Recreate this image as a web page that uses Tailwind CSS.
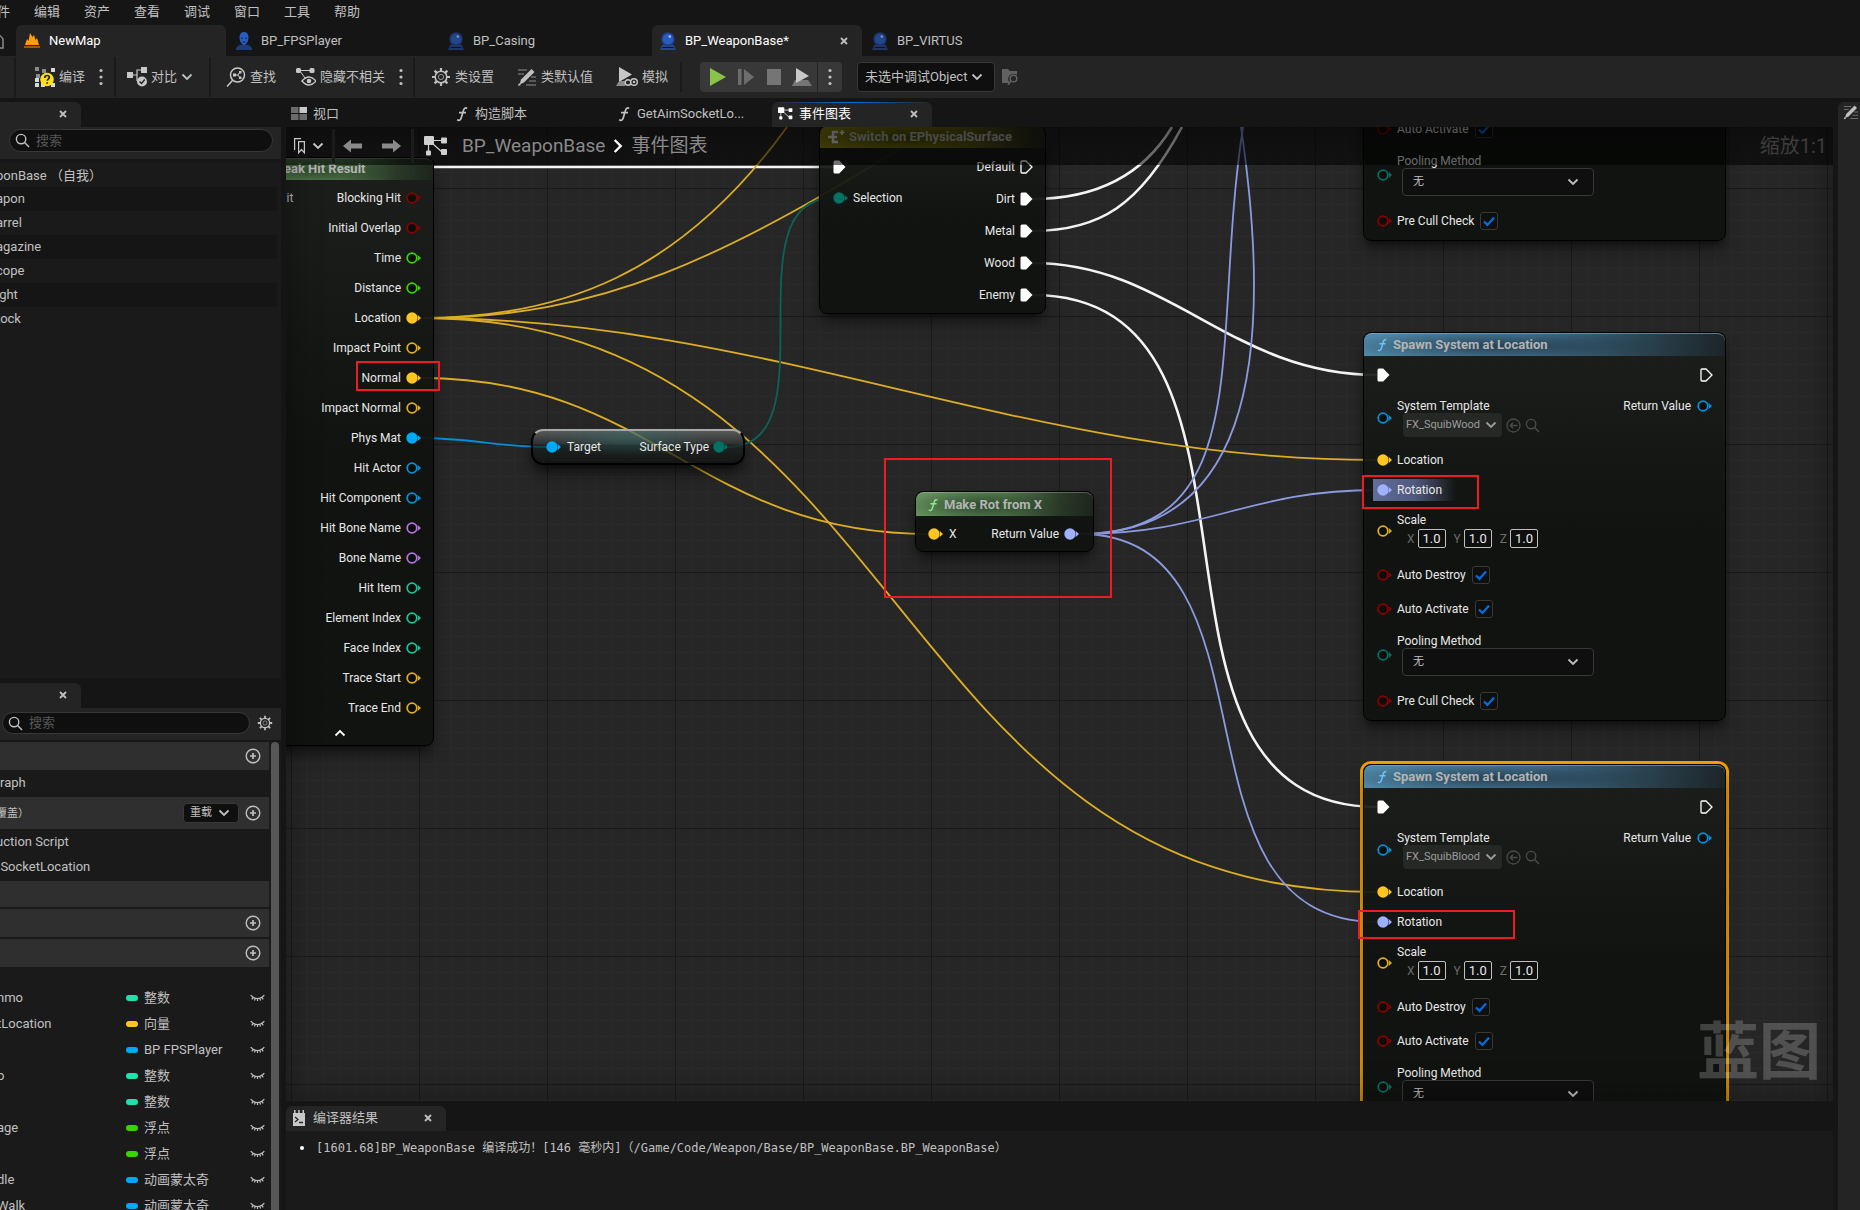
<!DOCTYPE html>
<html lang="zh-CN">
<head>
    <meta charset="UTF-8">
    <meta name="viewport" content="width=device-width, initial-scale=1.0">
    <title>BP_WeaponBase</title>
    <script src="https://cdn.jsdelivr.net/npm/@tailwindcss/browser@4"></script>
    <style>
        body {
            font-family: Roboto, "Noto Sans CJK SC", sans-serif;
        }
        .mono {
            font-family: "DejaVu Sans Mono", "Noto Sans CJK SC", monospace;
        }
        /* Full-width brackets with centred glyphs */
        .punct {
            display: inline-block;
            font-family: "Noto Sans CJK TC", sans-serif;
            text-spacing-trim: space-all;
        }
        /* 16px minor grid, 128px major grid */
        .grid-paper {
            background-color: #262626;
            background-image:
                linear-gradient(to right, #1a1a1a 1px, transparent 1px),
                linear-gradient(to bottom, #1a1a1a 1px, transparent 1px),
                linear-gradient(to right, #2a2a2a 1px, transparent 1px),
                linear-gradient(to bottom, #2a2a2a 1px, transparent 1px);
            background-size: 128px 128px, 128px 128px, 16px 16px, 16px 16px;
            background-position: 5px 61px, 5px 61px, 5px 13px, 5px 13px;
        }
        .node-body {
            background: linear-gradient(to bottom, rgba(27, 30, 27, .93), rgba(15, 18, 15, .95) 50%);
        }
        .getter-body {
            background: radial-gradient(ellipse 40% 60% at 45% 20%, rgba(50, 110, 105, .5), transparent),
                linear-gradient(to bottom, rgba(115, 115, 115, .65) 0, rgba(50, 54, 54, .6) 42%, rgba(24, 32, 30, .65) 45%, rgba(14, 16, 14, .75) 100%);
        }
        .head-blue {
            background: radial-gradient(ellipse 45% 70% at 38% 55%, rgba(25, 45, 60, .75), transparent),
                linear-gradient(100deg, #5088a8 0%, #477896 45%, #2c4654 75%, #1c2428 100%);
        }
        .head-green {
            background: radial-gradient(ellipse 45% 70% at 38% 55%, rgba(25, 50, 25, .7), transparent),
                linear-gradient(100deg, #66925f 0%, #557c50 50%, #2a3a28 80%, #1c241c 100%);
        }
        .head-yellow {
            background: radial-gradient(ellipse 45% 70% at 38% 55%, rgba(50, 50, 0, .7), transparent),
                linear-gradient(100deg, #8d8c14 0%, #7c7b12 50%, #3a3a1c 85%, #232320 100%);
        }
    </style>
</head>
<body class="bg-[#151515] text-[#c0c0c0] text-[13px] leading-4">

    <!-- Icon set -->
    <svg class="hidden">
        <symbol id="i-chevron" viewBox="0 0 12 12"><path d="M1.500 3.500 6 8l4.500-4.500" fill="none" stroke="currentColor" stroke-width="1.800"/></symbol>
        <symbol id="i-close" viewBox="0 0 8 8"><path d="M1 1l6 6M7 1 1 7" stroke="currentColor" stroke-width="1.800"/></symbol>
        <symbol id="i-search" viewBox="0 0 16 16"><g fill="none" stroke="currentColor" stroke-width="1.500"><circle cx="6.500" cy="6.500" r="5"/><path d="m10.200 10.200 4.800 4.800"/></g></symbol>
        <symbol id="i-dots" viewBox="0 0 4 18"><g fill="currentColor"><circle cx="2" cy="2.500" r="1.600"/><circle cx="2" cy="9" r="1.600"/><circle cx="2" cy="15.500" r="1.600"/></g></symbol>
        <symbol id="i-plus" viewBox="0 0 16 16"><g fill="none" stroke="currentColor" stroke-width="1.400"><circle cx="8" cy="8" r="6.800"/><path d="M8 5v6M5 8h6" stroke-width="1.700"/></g></symbol>
        <symbol id="i-gear" viewBox="0 0 20 20"><g fill="none" stroke="currentColor"><circle cx="10" cy="10" r="5.800" stroke-width="1.600"/><circle cx="10" cy="10" r="2.600" stroke-width="1" opacity=".7"/><path d="M10 1v3.500M10 15.500V19M1 10h3.500M15.500 10H19M3.600 3.600l2.500 2.500M13.900 13.900l2.500 2.500M16.400 3.600l-2.500 2.500M6.100 13.900l-2.500 2.500" stroke-width="2.200"/></g></symbol>
        <symbol id="i-f" viewBox="0 0 14 16"><path d="M12 2.600C10.800 1.300 9.300 1.800 8.600 4L6.200 12c-.7 2.300-2.400 3-4 1.700M4 6.700h7" fill="none" stroke="currentColor" stroke-width="1.700"/></symbol>
        <symbol id="i-graph" viewBox="0 0 24 20"><g fill="currentColor"><rect x="0" y="0" width="10" height="9" rx="1"/><rect x="17" y="1.500" width="6" height="6" rx="1"/><rect x="17" y="13" width="6" height="6" rx="1"/><rect x="2" y="14.500" width="5" height="5" rx="1"/></g><path d="M9 4.500h9M9 8l9 8M4.500 9v6" stroke="currentColor" stroke-width="1.200"/></symbol>
        <symbol id="i-sphere" viewBox="0 0 16 18"><path d="M2.500 12.500h11l2.500 5.500H0z" fill="#24468c"/><path d="M2.500 15.500h11" stroke="#151515"/><circle cx="8" cy="7" r="6.800" fill="#1e3f8c"/><circle cx="8" cy="7" r="5.300" fill="#2a5bc0"/><circle cx="9.800" cy="4.500" r="1.300" fill="#9fc0ff"/></symbol>
        <symbol id="i-person" viewBox="0 0 16 18"><path d="M0 18c0-3.500 2.500-5 5-5.300h6c2.500.3 5 1.800 5 5.300z" fill="#1f3c78"/><path d="M8 0c3 0 4.500 2 4.500 5.500S10.500 13 8 13 3.500 9 3.500 5.500 5 0 8 0z" fill="#2a5bc0"/><path d="M5 6.200h2M9 6.200h2M6.500 10h3" stroke="#14264d"/></symbol>
        <symbol id="i-level" viewBox="0 0 16 15"><path d="M0 15v-2h16v2z" fill="#9a5c08"/><path d="M1 12 3 6l1.500 2L6 0l2.500 4L10 2l1.500 5L13 5l2 7z" fill="#ff9d0c"/></symbol>
        <symbol id="i-pencil" viewBox="0 0 20 20"><path d="M1 3h9M1 7h6M12 14h7M9 18h10M14 10h5" stroke="#6b6b6b" stroke-width="1.300"/><path d="m2.500 17.500 1.500-5L14.500 2l3 3L7 15.500z" fill="currentColor"/><path d="m1 19 3-1-2-2z" fill="currentColor"/></symbol>
        <symbol id="i-eye" viewBox="0 0 15 8"><path d="M.7 1.200c3.500 4.400 10.100 4.400 13.600 0M3 3.500 1.800 5.300M7.500 4.800V7M12 3.500l1.200 1.800M5.100 4.600l-.6 1.900M9.900 4.600l.6 1.900" fill="none" stroke="currentColor" stroke-width="1.200"/></symbol>
        <symbol id="i-arrow" viewBox="0 0 20 14"><path d="M0 7 8 .5v4h11v5H8v4z" fill="currentColor"/></symbol>
        <symbol id="p-open" viewBox="0 0 16 12"><circle cx="6" cy="6" r="4.800" fill="#0b0d0b" stroke="currentColor" stroke-width="1.800"/><path d="M11.500 2.800 15 6l-3.500 3.200c.8-2 .8-4.400 0-6.400z" fill="currentColor"/></symbol>
        <symbol id="p-full" viewBox="0 0 16 12"><circle cx="6" cy="6" r="5.700" fill="currentColor"/><path d="M11.500 2.800 15 6l-3.500 3.200c.8-2 .8-4.400 0-6.400z" fill="currentColor"/></symbol>
        <symbol id="x-open" viewBox="0 0 13 14"><path d="M1 2q0-1 1-1h4l6 6-6 6H2q-1 0-1-1z" fill="none" stroke="#fff" stroke-width="1.300"/></symbol>
        <symbol id="x-full" viewBox="0 0 13 14"><path d="M.5 2q0-1.500 1.500-1.500h4.200L12.500 7l-6.300 6.500H2q-1.500 0-1.500-1.500z" fill="#fff"/></symbol>
    </svg>

    <div class="flex flex-col h-screen overflow-hidden">
        <!-- Menu bar -->
        <nav class="flex gap-6 h-[25px] -ml-4 pt-1 shrink-0 whitespace-nowrap">
            <a href="#">文件</a>
            <a href="#">编辑</a>
            <a href="#">资产</a>
            <a href="#">查看</a>
            <a href="#">调试</a>
            <a href="#">窗口</a>
            <a href="#">工具</a>
            <a href="#">帮助</a>
        </nav>

        <!-- Document tabs -->
        <div class="flex gap-0.5 h-[31px] shrink-0">
            <div class="w-3.5 flex items-center overflow-hidden">
                <svg class="w-4 h-4 -ml-3 shrink-0" viewBox="0 0 16 16"><path d="M1 15V6q7-10 14 0v9h-4V9H7v6z" fill="none" stroke="#8a8a8a" stroke-width="1.500"/></svg>
            </div>
            <a href="#" class="w-[210px] flex items-center gap-[9px] pl-2 bg-[#242424] rounded-t-md text-white"><svg class="w-4 h-[15px]"><use href="#i-level"/></svg>NewMap</a>
            <a href="#" class="w-[210px] flex items-center gap-[9px] pl-2"><svg class="w-4 h-[18px]"><use href="#i-person"/></svg>BP_FPSPlayer</a>
            <a href="#" class="w-[210px] flex items-center gap-[9px] pl-2"><svg class="w-4 h-[18px] opacity-70"><use href="#i-sphere"/></svg>BP_Casing</a>
            <div class="w-[210px] flex items-center gap-[9px] pl-2 bg-[#242424] rounded-t-md text-white"><svg class="w-4 h-[18px]"><use href="#i-sphere"/></svg>BP_WeaponBase*
                <button aria-label="关闭" class="ml-auto mr-3.5 text-[#c0c0c0]"><svg class="w-2 h-2"><use href="#i-close"/></svg></button>
            </div>
            <a href="#" class="w-[210px] flex items-center gap-[9px] pl-2"><svg class="w-4 h-[18px] opacity-70"><use href="#i-sphere"/></svg>BP_VIRTUS</a>
        </div>

        <!-- Toolbar -->
        <div class="flex h-[42px] py-px bg-[#242424] shrink-0 whitespace-nowrap">
            <div class="w-4 border-r-2 border-[#1a1a1a]"></div>
            <div class="flex items-center pl-[19px] pr-[11px] border-r-2 border-[#1a1a1a]">
                <button class="flex items-center gap-1">
                    <svg class="w-5 h-5" viewBox="0 0 20 20"><g fill="#8a8a8a"><path d="M0 0h4v4H0zM7 2h4v4H7zM1 7h4v4H1z"/></g><g fill="#d8d8d8"><path d="M16 1h4v4h-4zM0 11h4v4H0zM0 16h4v4H0zM6 16h4v4H6zM16 16h4v4h-4z"/></g><circle cx="12" cy="12.500" r="6.800" fill="#ffdf18"/><path d="M9.800 11q0-2.500 2.300-2.500 2.200 0 2.200 1.900c0 1.400-2 1.500-2 3.300M12.200 15.200v1.600" fill="none" stroke="#222" stroke-width="1.700"/></svg>
                    编译
                </button>
                <button aria-label="编译选项" class="ml-3.5"><svg class="w-1 h-[18px]"><use href="#i-dots"/></svg></button>
            </div>
            <div class="flex items-center pl-[11px] pr-4 border-r-2 border-[#1a1a1a]">
                <button class="flex items-center gap-1">
                    <svg class="w-5 h-5" viewBox="0 0 20 20"><path d="M0 5h6v6H0zM14 0h6v6h-6z" fill="#c8c8c8"/><path d="M6 8h4V3h4M10 8v6" fill="none" stroke="#c8c8c8" stroke-width="1.200"/><circle cx="15" cy="14.500" r="5" fill="#c8c8c8"/><path d="m12.500 14.500 2 2 3.300-4" fill="none" stroke="#242424" stroke-width="1.500"/></svg>
                    对比
                    <svg class="w-3 h-3"><use href="#i-chevron"/></svg>
                </button>
            </div>
            <div class="flex items-center pl-[15px] pr-2.5 border-r-2 border-[#1a1a1a]">
                <button class="flex items-center gap-1">
                    <svg class="w-5 h-5" viewBox="0 0 20 20"><g fill="none" stroke="#c8c8c8" stroke-width="1.500"><circle cx="11.500" cy="8" r="7"/><path d="m6.500 13.500-5.500 6"/></g><path d="M7 6.500h3v3H7zM13 4h2.500v2.500H13zM13 9.500h2.500V12H13z" fill="#c8c8c8"/><path d="M10 8h2l1.500-2.500M12 8l1.500 2.500" fill="none" stroke="#c8c8c8"/></svg>
                    查找
                </button>
                <button class="flex items-center gap-1 ml-5">
                    <svg class="w-5 h-5" viewBox="0 0 20 20"><path d="M3 3.500h13M4 4l5 7" stroke="#c8c8c8"/><rect x="0" y="1" width="5" height="5" rx="1.500" fill="#c8c8c8"/><rect x="13.500" y="1" width="5" height="5" rx="1.500" fill="#c8c8c8"/><path d="M6 14q7-8 14 0-7 8-14 0z" fill="#242424" stroke="#c8c8c8" stroke-width="1.500"/><circle cx="13" cy="14" r="2.300" fill="#c8c8c8"/></svg>
                    隐藏不相关
                </button>
                <button aria-label="隐藏选项" class="ml-3.5"><svg class="w-1 h-[18px]"><use href="#i-dots"/></svg></button>
            </div>
            <div class="flex items-center gap-[23px] pl-4 pr-3">
                <button class="flex items-center gap-1"><svg class="w-5 h-5"><use href="#i-gear"/></svg>类设置</button>
                <button class="flex items-center gap-1"><svg class="w-5 h-5"><use href="#i-pencil"/></svg>类默认值</button>
                <button class="flex items-center gap-1">
                    <svg class="w-[22px] h-5" viewBox="0 0 22 20"><path d="M3 0l13 7.500L3 15z" fill="#c8c8c8"/><path d="M0 19l3-5h6v5z" fill="#8a8a8a"/><g fill="#242424" stroke="#c8c8c8" stroke-width="1.400"><circle cx="12" cy="15.500" r="2.800"/><circle cx="18" cy="15" r="3.300"/></g><circle cx="18" cy="15" r="1.200" fill="#c8c8c8"/></svg>
                    模拟
                </button>
            </div>
            <div class="w-0.5 my-[5px] bg-[#1a1a1a]"></div>
            <div class="flex items-center self-center h-[30px] ml-[18px] rounded bg-[#383838]">
                <button aria-label="播放" class="pl-2.5 pr-3"><svg class="w-4 h-[18px]" viewBox="0 0 16 18"><path d="M0 0l16 9-16 9z" fill="#8bc34a"/></svg></button>
                <button aria-label="步进" class="pr-[13px]"><svg class="w-4 h-4" viewBox="0 0 16 16"><path d="M0 0h3.500v16H0zM6 0l10 8-10 8z" fill="#6d6d6d"/></svg></button>
                <button aria-label="停止" class="pr-[11px]"><svg class="w-3.5 h-4" viewBox="0 0 14 16"><path d="M0 0h14v16H0z" fill="#757575"/></svg></button>
                <button aria-label="弹出" class="pr-[5px]"><svg class="w-5 h-[18px]" viewBox="0 0 20 18"><path d="M3 12h13l4 6H0z" fill="#757575"/><path d="M4 0l13 8L4 15z" fill="#c8c8c8"/></svg></button>
                <div class="w-px h-full bg-[#242424]"></div>
                <button aria-label="播放选项" class="px-2.5"><svg class="w-1 h-[18px]"><use href="#i-dots"/></svg></button>
            </div>
            <div class="grid items-center self-center ml-[15px]">
                <select aria-label="调试对象" class="[grid-area:1/1] appearance-none w-[138px] h-[30px] pl-[7px] rounded border border-[#383838] bg-[#0f0f0f]">
                    <option>未选中调试Object</option>
                </select>
                <svg class="[grid-area:1/1] justify-self-end mr-3 w-3 h-3 pointer-events-none"><use href="#i-chevron"/></svg>
            </div>
            <button aria-label="浏览" class="ml-[7px]"><svg class="w-4 h-4" viewBox="0 0 16 16"><path d="M0 0h6l1.500 2H15v4a5 5 0 0 0-7 8H0z" fill="#616161"/><circle cx="11.500" cy="9.500" r="3.300" fill="none" stroke="#616161" stroke-width="1.500"/><path d="m9 12-3 4" stroke="#616161" stroke-width="1.500"/></svg></button>
        </div>

        <div class="flex flex-1 min-h-0">
            <!-- Left column -->
            <aside class="w-[281px] shrink-0 flex flex-col gap-[5px] pt-1 overflow-hidden">
                <section class="flex-[576] min-h-0 flex flex-col">
                    <div class="w-[81px] h-[25px] shrink-0 flex items-center justify-end pr-3.5 pb-0.5 bg-[#242424] rounded-tr-md">
                        <button aria-label="关闭"><svg class="w-2 h-2"><use href="#i-close"/></svg></button>
                    </div>
                    <div class="h-8 shrink-0 bg-[#242424] pl-[9px] pr-2 pt-0.5">
                        <label class="flex items-center gap-1.5 h-[23px] px-[5px] rounded-full border border-[#383838] bg-[#0f0f0f]">
                            <svg class="w-[15px] h-[15px] shrink-0"><use href="#i-search"/></svg>
                            <input type="text" placeholder="搜索" aria-label="搜索组件" class="w-full outline-none placeholder:text-[#575757]">
                        </label>
                    </div>
                    <ul id="components" class="flex-1 bg-[#1a1a1a] border-t-4 border-[#171717] pr-1 overflow-hidden"></ul>
                </section>

                <section class="flex-[527] min-h-0 flex flex-col">
                    <div class="w-[81px] h-[25px] shrink-0 flex items-center justify-end pr-3.5 pb-0.5 bg-[#242424] rounded-tr-md">
                        <button aria-label="关闭"><svg class="w-2 h-2"><use href="#i-close"/></svg></button>
                    </div>
                    <div class="h-8 shrink-0 flex items-center gap-[7px] bg-[#242424] pl-0.5 pr-2 pb-0.5">
                        <label class="flex-1 flex items-center gap-1.5 h-[22px] px-[5px] rounded-full border border-[#383838] bg-[#0f0f0f]">
                            <svg class="w-[15px] h-[15px] shrink-0"><use href="#i-search"/></svg>
                            <input type="text" placeholder="搜索" aria-label="搜索蓝图" class="w-full outline-none placeholder:text-[#575757]">
                        </label>
                        <button aria-label="设置"><svg class="w-4 h-4"><use href="#i-gear"/></svg></button>
                    </div>
                    <div class="flex flex-1 min-h-0 bg-[#1a1a1a] border-t-2 border-[#171717]">
                        <div class="w-[269px] shrink-0 overflow-hidden">
                            <div class="h-7 flex items-center justify-end pr-2 bg-[#2f2f2f]"><button aria-label="添加图表"><svg class="w-4 h-4"><use href="#i-plus"/></svg></button></div>
                            <p class="h-[27px] pb-0.5 flex items-center">raph</p>
                            <div class="h-8 flex items-center bg-[#2f2f2f] pr-2 text-[11px]">
                                <span class="-ml-1">覆盖<span class="punct" lang="zh-Hant">）</span></span>
                                <button class="ml-auto mr-1.5 flex items-center gap-1.5 w-14 h-5 pl-1.5 rounded border border-[#383838] bg-[#0f0f0f]">重载<svg class="w-3 h-3"><use href="#i-chevron"/></svg></button>
                                <button aria-label="添加函数"><svg class="w-4 h-4"><use href="#i-plus"/></svg></button>
                            </div>
                            <p class="h-[25px] -ml-1 flex items-center">uction Script</p>
                            <p class="h-[27px] -ml-[11px] pb-0.5 flex items-center">mSocketLocation</p>
                            <div class="h-[26px] bg-[#2f2f2f]"></div>
                            <div class="h-7 mt-0.5 flex items-center justify-end pr-2 bg-[#2f2f2f]"><button aria-label="添加宏"><svg class="w-4 h-4"><use href="#i-plus"/></svg></button></div>
                            <div class="h-7 mt-0.5 mb-[18px] flex items-center justify-end pr-2 bg-[#2f2f2f]"><button aria-label="添加变量"><svg class="w-4 h-4"><use href="#i-plus"/></svg></button></div>
                            <ul id="variables"></ul>
                        </div>
                        <div class="w-2 ml-0.5 rounded-t-full bg-[#575757]"></div>
                    </div>
                </section>
            </aside>

            <!-- Graph column -->
            <main class="flex-1 min-w-0 flex flex-col ml-[5px] pt-1">
                <div class="flex gap-0.5 h-[25px] shrink-0">
                    <a href="#" class="w-40 flex items-center gap-1.5 pl-[5px] pb-0.5"><svg class="w-4 h-[13px]" viewBox="0 0 16 13"><path d="M0 0h7.500v6H0z" fill="#6b6b6b"/><path d="M8.500 0H16v6H8.500z" fill="#c8c8c8"/><path d="M0 7h7.500v6H0zM8.500 7H16v6H8.500z" fill="#6b6b6b"/></svg>视口</a>
                    <a href="#" class="w-40 flex items-center gap-1.5 pl-[7px] pb-0.5"><svg class="w-3.5 h-4"><use href="#i-f"/></svg>构造脚本</a>
                    <a href="#" class="w-40 flex items-center gap-1.5 pl-[7px] pb-0.5"><svg class="w-3.5 h-4"><use href="#i-f"/></svg>GetAimSocketLo...</a>
                    <div class="w-40 rounded-t-md overflow-hidden bg-[#242424] text-white">
                        <div class="h-px bg-linear-to-r from-transparent via-[#0070e0] to-transparent"></div>
                        <div class="flex items-center gap-1.5 h-6 pl-1.5 pb-[3px]"><svg class="w-[15px] h-[13px]"><use href="#i-graph"/></svg>事件图表
                            <button aria-label="关闭" class="ml-auto mr-3.5 text-[#c0c0c0]"><svg class="w-2 h-2"><use href="#i-close"/></svg></button>
                        </div>
                    </div>
                </div>

                <!-- Graph canvas -->
                <div class="grid-paper relative flex-1 min-h-0 overflow-hidden text-[#e8e8e8] text-[12px]">
                    <!-- Wires -->
                    <svg class="absolute inset-0 w-full h-full">
                        <g transform="translate(-286 -127)" fill="none" stroke-width="1.800">
                            <g stroke="#f4f4f4" stroke-width="2.600">
                                <path d="M434 167H834"/>
                                <path d="M1032 199C1090 199 1140 180 1172 127"/>
                                <path d="M1032 231C1100 231 1140 205 1182 127"/>
                                <path d="M1032 263C1170 263 1230 375 1378 375"/>
                                <path d="M1032 295C1305 295 1105 807 1378 807"/>
                            </g>
                            <g stroke="#dcae24">
                                <path d="M421 318C560 318 680 275 787 127"/>
                                <path d="M421 318C600 318 720 262 935 127"/>
                                <path d="M421 318C771 318 1022 460 1377 460"/>
                                <path d="M421 318C911 318 882 892 1377 892"/>
                                <path d="M421 378C654 378 697 534 930 534"/>
                            </g>
                            <path d="M421 438C470 438 500 447 547 447" stroke="#008fd8"/>
                            <path d="M728 447C833 447 728 198 833 198" stroke="#0b6358"/>
                            <g stroke="#8c9ae0">
                                <path d="M1080 534C1210 534 1247 490 1377 490"/>
                                <path d="M1080 534C1290 534 1159 922 1377 922"/>
                                <path d="M1080 534C1260 534 1210 340 1243 127"/>
                                <path d="M1080 534C1240 534 1278 380 1241 127"/>
                            </g>
                        </g>
                    </svg>

                    <!-- Break Hit Result -->
                    <div class="node-body absolute -left-[42px] top-[30px] w-[190px] rounded-lg border border-black shadow-lg shadow-black/50">
                        <div class="head-green h-[22px] flex items-center pl-[26px] pb-0.5 rounded-t-lg border-t border-white/25 text-[13px] font-bold text-[#b4b4b4] whitespace-nowrap">Break Hit Result</div>
                        <div class="flex justify-between pt-[3px] pr-[11px]">
                            <span class="pl-[33px] pt-[7px] text-[#b4b4b4]">Hit</span>
                            <ul id="hitPins"></ul>
                        </div>
                        <button aria-label="折叠" class="flex w-full h-[22px] justify-center pt-1 pl-0.5 text-white"><svg class="w-3 h-3 rotate-180"><use href="#i-chevron"/></svg></button>
                    </div>

                    <!-- Switch on EPhysicalSurface -->
                    <div class="node-body absolute left-[533px] -top-0.5 w-[227px] rounded-lg border border-black shadow-lg shadow-black/50">
                        <div class="head-yellow h-[22px] flex items-center gap-1 pl-2 rounded-t-lg text-[13px] font-bold text-[#b4b4b4] whitespace-nowrap">
                            <svg class="w-[17px] h-4" viewBox="0 0 17 16"><path d="M10 3H5v10h5M0 8h9" fill="none" stroke="#e8e8e8" stroke-width="2.400"/><path d="M11.500 3.500h5M14 1v5" stroke="#e8e8e8" stroke-width="1.500"/></svg>Switch on EPhysicalSurface
                        </div>
                        <div class="flex justify-between pt-[3px] pb-0.5 pl-[13px] pr-3">
                            <div>
                                <div class="h-8 flex items-center"><svg class="w-[13px] h-3.5"><use href="#x-full"/></svg></div>
                                <div class="h-8 pb-0.5 flex items-center gap-1"><svg class="w-4 h-3 text-[#007264]"><use href="#p-full"/></svg>Selection</div>
                            </div>
                            <ul id="switchPins"></ul>
                        </div>
                    </div>

                    <!-- Surface Type getter -->
                    <div class="getter-body absolute left-[245px] top-[302px] w-[214px] h-9 pl-[13px] pr-3.5 flex items-center justify-between rounded-xl border-2 border-black border-t-[#a8a8a8] shadow-lg shadow-black/60">
                        <span class="flex items-center gap-[5px]"><svg class="w-4 h-3 text-[#00a8f8]"><use href="#p-full"/></svg>Target</span>
                        <span class="flex items-center gap-1">Surface Type<svg class="w-4 h-3 text-[#007264]"><use href="#p-full"/></svg></span>
                    </div>

                    <!-- Make Rot from X -->
                    <div class="node-body absolute left-[629px] top-[364px] w-[179px] rounded-lg border border-black shadow-lg shadow-black/50">
                        <div class="head-green h-6 flex items-center gap-1 pl-2.5 rounded-t-lg border-t border-white/25 text-[13px] font-bold text-[#b4b4b4] whitespace-nowrap">
                            <svg class="w-3.5 h-3.5 text-[#8fe78b]"><use href="#i-f"/></svg>Make Rot from X
                        </div>
                        <div class="h-[35px] flex items-center justify-between pl-3 pr-[13px]">
                            <span class="flex items-center gap-[5px]"><svg class="w-4 h-3 text-[#ffc621]"><use href="#p-full"/></svg>X</span>
                            <span class="flex items-center gap-[5px]">Return Value<svg class="w-4 h-3 text-[#9fb0ff]"><use href="#p-full"/></svg></span>
                        </div>
                    </div>

                    <div id="spawnNodes"></div>

                    <!-- Edge vignette -->
                    <div class="absolute inset-0 pointer-events-none shadow-[inset_0_0_36px_rgba(0,0,0,0.35)]"></div>

                    <!-- Breadcrumb bar -->
                    <div class="absolute inset-x-0 top-0 h-[38px] bg-black/55 flex items-center pl-2 pr-1.5 text-[19px] leading-6 text-[#8a8a8a] whitespace-nowrap">
                        <button aria-label="书签" class="flex items-center gap-[7px] text-[#c8c8c8]">
                            <svg class="w-[11px] h-4" viewBox="0 0 11 16"><path d="M.6 12V.6H7M4.600 3.600h5.800v11.200L7.500 11.500l-2.900 3.300z" fill="none" stroke="currentColor" stroke-width="1.200"/></svg>
                            <svg class="w-3 h-3"><use href="#i-chevron"/></svg>
                        </button>
                        <div class="w-[3px] h-[34px] ml-2 bg-[#1c1c1c]"></div>
                        <button aria-label="后退" class="ml-2"><svg class="w-5 h-3.5"><use href="#i-arrow"/></svg></button>
                        <button aria-label="前进" class="ml-[18px]"><svg class="w-5 h-3.5 rotate-180"><use href="#i-arrow"/></svg></button>
                        <div class="w-[3px] h-[34px] ml-2.5 mr-2.5 bg-[#1c1c1c]"></div>
                        <svg class="w-6 h-5 mr-3.5 text-[#d0d0d0]"><use href="#i-graph"/></svg>
                        <a href="#">BP_WeaponBase</a>
                        <svg class="w-4 h-4 mx-[5px] -rotate-90 text-white"><use href="#i-chevron"/></svg>
                        <span>事件图表</span>
                        <span class="ml-auto text-[20px] text-[#3c3c3c]">缩放1:1</span>
                    </div>

                    <div class="absolute right-3 bottom-2.5 text-[62px] leading-[76px] font-bold text-white/20 pointer-events-none">蓝图</div>

                    <!-- Red annotation boxes -->
                    <div class="absolute left-[70px] top-[234px] w-[84px] h-[30px] border-2 border-[#ed1c24]"></div>
                    <div class="absolute left-[598px] top-[331px] w-[228px] h-[140px] border-2 border-[#ed1c24]"></div>
                    <div class="absolute left-[1076px] top-[348px] w-[117px] h-[34px] border-2 border-[#ed1c24]"></div>
                    <div class="absolute left-[1072px] top-[783px] w-[157px] h-[29px] border-2 border-[#ed1c24]"></div>
                </div>

                <!-- Compiler results -->
                <section class="h-[109px] shrink-0 pt-[5px] flex flex-col">
                    <div class="w-40 h-[25px] flex items-center gap-2 pl-[7px] pr-3.5 pb-0.5 bg-[#242424] rounded-t-md">
                        <svg class="w-3 h-4" viewBox="0 0 12 16"><path d="M0 3h12v13H0zM1 0h1.500v4H1zM5.200 0h1.500v4H5.200zM9.500 0H11v4H9.500z" fill="#c8c8c8"/><path d="m2 7 3 2.500L2 12M6 12.500h4" fill="none" stroke="#242424" stroke-width="1.300"/></svg>
                        编译器结果
                        <button aria-label="关闭" class="ml-auto"><svg class="w-2 h-2"><use href="#i-close"/></svg></button>
                    </div>
                    <div class="flex-1 bg-[#1a1a1a] pl-3.5 pt-[9px]">
                        <p class="mono flex items-center gap-3 text-[12px] whitespace-nowrap"><span class="w-1 h-1 rounded-full bg-white"></span>[1601.68]BP_WeaponBase 编译成功！[146 毫秒内]（/Game/Code/Weapon/Base/BP_WeaponBase.BP_WeaponBase）</p>
                    </div>
                </section>
            </main>

            <!-- Collapsed details panel -->
            <aside class="w-[22px] shrink-0 ml-[5px] mt-1 pt-0.5 pl-1 bg-[#242424] rounded-tl-md overflow-hidden">
                <svg class="w-[18px] h-4"><use href="#i-pencil"/></svg>
            </aside>
        </div>
    </div>

    <script>
        const components = ['ponBase <span class="punct" lang="zh-Hant">（</span>自我<span class="punct" lang="zh-Hant">）</span>', 'apon', 'arrel', 'agazine', 'cope', 'ight', 'tock'];

        document.getElementById('components').innerHTML = components.map((name, index) => `
            <li class="h-6 flex items-center ${index % 2 ? 'bg-[#151515]' : ''}"><span class="-ml-1">${name}</span></li>
        `).join('');

        const variables = [
            ['nmo', 'bg-[#1fe3af]', '整数'],
            ['tLocation', 'bg-[#ffc621]', '向量'],
            ['', 'bg-[#00a8f8]', 'BP FPSPlayer'],
            ['o', 'bg-[#1fe3af]', '整数'],
            ['', 'bg-[#1fe3af]', '整数'],
            ['age', 'bg-[#38d500]', '浮点'],
            ['', 'bg-[#38d500]', '浮点'],
            ['dle', 'bg-[#00a8f8]', '动画蒙太奇'],
            ['Walk', 'bg-[#00a8f8]', '动画蒙太奇']
        ];

        document.getElementById('variables').innerHTML = variables.map(([name, color, type]) => `
            <li class="h-[26px] flex items-center pr-1">
                <span class="w-[126px] -indent-[3px]">${name}</span>
                <span class="w-3 h-1.5 rounded-full mr-1.5 ${color}"></span>
                <span>${type}</span>
                <button aria-label="可见性" class="ml-auto"><svg class="w-[15px] h-2"><use href="#i-eye"/></svg></button>
            </li>
        `).join('');

        const hitPins = [
            ['Blocking Hit', 'open', 'text-[#8c0000]'],
            ['Initial Overlap', 'open', 'text-[#8c0000]'],
            ['Time', 'open', 'text-[#38d500]'],
            ['Distance', 'open', 'text-[#38d500]'],
            ['Location', 'full', 'text-[#ffc621]'],
            ['Impact Point', 'open', 'text-[#e0ae20]'],
            ['Normal', 'full', 'text-[#ffc621]'],
            ['Impact Normal', 'open', 'text-[#e0ae20]'],
            ['Phys Mat', 'full', 'text-[#00a8f8]'],
            ['Hit Actor', 'open', 'text-[#0094dc]'],
            ['Hit Component', 'open', 'text-[#0094dc]'],
            ['Hit Bone Name', 'open', 'text-[#b473e0]'],
            ['Bone Name', 'open', 'text-[#b473e0]'],
            ['Hit Item', 'open', 'text-[#1bc497]'],
            ['Element Index', 'open', 'text-[#1bc497]'],
            ['Face Index', 'open', 'text-[#1bc497]'],
            ['Trace Start', 'open', 'text-[#e0ae20]'],
            ['Trace End', 'open', 'text-[#e0ae20]']
        ];

        document.getElementById('hitPins').innerHTML = hitPins.map(([name, kind, color]) => `
            <li class="h-[30px] flex items-center justify-end gap-[5px]">${name}<svg class="w-4 h-3 ${color}"><use href="#p-${kind}"/></svg></li>
        `).join('');

        document.getElementById('switchPins').innerHTML = ['Default', 'Dirt', 'Metal', 'Wood', 'Enemy'].map(name => `
            <li class="h-8 flex items-center justify-end gap-[5px]">${name}<svg class="w-[13px] h-3.5"><use href="#x-${name === 'Default' ? 'open' : 'full'}"/></svg></li>
        `).join('');

        /**
         * Renders a boolean pin with its checkbox.
         */
        function renderCheck(label) {
            return `
                <label class="h-[34px] flex items-center gap-1">
                    <svg class="w-4 h-3 text-[#8c0000]"><use href="#p-open"/></svg>${label}
                    <span class="grid items-center justify-items-center ml-0.5">
                        <input type="checkbox" checked class="[grid-area:1/1] appearance-none w-[18px] h-[18px] rounded-[3px] border border-[#383838] bg-[#0f0f0f]">
                        <svg class="[grid-area:1/1] w-3 h-3 pointer-events-none" viewBox="0 0 12 12"><path d="m1 6.500 3.500 3.500L11 2.500" fill="none" stroke="#0070e0" stroke-width="2.200"/></svg>
                    </span>
                </label>`;
        }

        /**
         * Renders a "Spawn System at Location" node.
         */
        function renderSpawnNode(node) {
            return `
                <div class="absolute left-[1077px] w-[363px] rounded-lg ${node.place}">
                    <div class="node-body rounded-lg border border-black pb-0.5 shadow-lg shadow-black/50">
                        <div class="head-blue h-[23px] flex items-center gap-1 pl-[11px] rounded-t-lg border-t border-[#7db5d5]/60 text-[13px] font-bold text-[#b4b4b4]">
                            <svg class="w-3.5 h-3.5 text-[#6cc4f5]"><use href="#i-f"/></svg>Spawn System at Location
                        </div>
                        <div class="flex justify-between pl-[13px] pr-3">
                            <div>
                                <div class="h-[38px] flex items-center"><svg class="w-[13px] h-3.5"><use href="#x-full"/></svg></div>
                                <div class="h-12 mb-[3px] flex items-center gap-1">
                                    <svg class="w-4 h-3 text-[#0094dc]"><use href="#p-open"/></svg>
                                    <div>
                                        <div class="leading-[14px]">System Template</div>
                                        <div class="flex items-center gap-1 pl-1.5 text-[#4a4a4a]">
                                            <button class="h-6 flex items-center gap-[5px] pl-[3px] pr-[5px] rounded bg-[#262826] text-[11px] text-[#9c9c9c]">${node.system}<svg class="w-3 h-3"><use href="#i-chevron"/></svg></button>
                                            <button aria-label="使用选中项"><svg class="w-[15px] h-[15px]" viewBox="0 0 15 15"><g fill="none" stroke="currentColor" stroke-width="1.300"><circle cx="7.500" cy="7.500" r="6.500"/><path d="M11.500 7.500h-7M7 4.800 4.300 7.500 7 10.200"/></g></svg></button>
                                            <button aria-label="浏览资产"><svg class="w-[15px] h-[15px]"><use href="#i-search"/></svg></button>
                                        </div>
                                    </div>
                                </div>
                                <div class="h-[30px] flex items-center gap-1"><svg class="w-4 h-3 text-[#ffc621]"><use href="#p-full"/></svg>Location</div>
                                <div class="h-[30px] flex items-center">
                                    <div class="h-[22px] -ml-1 pl-1 pr-3.5 flex items-center gap-1 ${node.rotation}"><svg class="w-4 h-3 text-[#9fb0ff]"><use href="#p-full"/></svg>Rotation</div>
                                </div>
                                <div class="h-[53px] pb-0.5 flex items-center gap-1">
                                    <svg class="w-4 h-3 text-[#e0ae20]"><use href="#p-open"/></svg>
                                    <div>
                                        <div class="mb-0.5 leading-[14px]">Scale</div>
                                        <div class="flex gap-2 pl-2.5">
                                            ${['X', 'Y', 'Z'].map(axis => `
                                                <label class="flex items-center gap-[3px] text-[#6b6b6b]">${axis}<input type="text" value="1.0" class="w-[28px] h-[19px] rounded-xs border border-[#c0c0c0] bg-[#0f0f0f] text-center text-[13px] text-[#e8e8e8]"></label>
                                            `).join('')}
                                        </div>
                                    </div>
                                </div>
                                ${renderCheck('Auto Destroy')}
                                ${renderCheck('Auto Activate')}
                                <div class="h-[58px] flex items-center gap-1">
                                    <svg class="w-4 h-3 text-[#007264]"><use href="#p-open"/></svg>
                                    <label>
                                        <span class="block leading-[14px]">Pooling Method</span>
                                        <span class="grid items-center ml-[5px]">
                                            <select class="[grid-area:1/1] appearance-none w-48 h-7 pl-2.5 rounded border border-[#383838] bg-[#0f0f0f] text-[11px] text-[#c0c0c0]"><option>无</option></select>
                                            <svg class="[grid-area:1/1] justify-self-end mr-[15px] w-3 h-3 pointer-events-none text-[#c0c0c0]"><use href="#i-chevron"/></svg>
                                        </span>
                                    </label>
                                </div>
                                ${renderCheck('Pre Cull Check')}
                            </div>
                            <div>
                                <div class="h-[38px] flex items-center justify-end"><svg class="w-[13px] h-3.5"><use href="#x-open"/></svg></div>
                                <div class="h-6 flex items-center gap-1.5">Return Value<svg class="w-4 h-3 text-[#0094dc]"><use href="#p-open"/></svg></div>
                            </div>
                        </div>
                    </div>
                </div>`;
        }

        const spawnNodes = [
            { place: '-top-[275px]', system: 'FX_SquibMetal', rotation: '' },
            { place: 'top-[205px]', system: 'FX_SquibWood', rotation: 'bg-linear-to-r from-[#626d99] via-[#505a80] to-transparent' },
            { place: 'top-[637px] ring-3 ring-[#f0a000]', system: 'FX_SquibBlood', rotation: '' }
        ];

        document.getElementById('spawnNodes').innerHTML = spawnNodes.map(renderSpawnNode).join('');
    </script>
</body>
</html>
